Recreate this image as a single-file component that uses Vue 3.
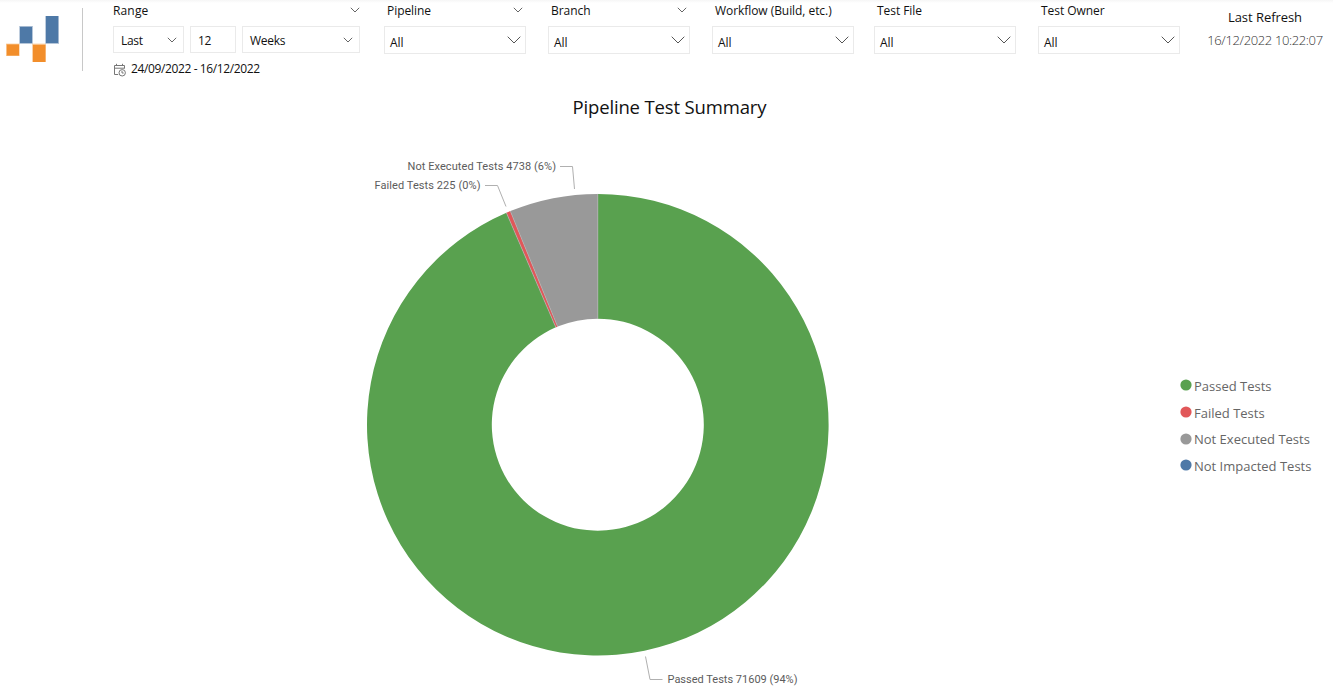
<script setup>
const slicers = [
  { title: 'Pipeline', toggle: true, cls: 'pipeline' },
  { title: 'Branch', toggle: true, cls: 'branch' },
  { title: 'Workflow (Build, etc.)', toggle: false, cls: 'workflow' },
  { title: 'Test File', toggle: false, cls: 'file' },
  { title: 'Test Owner', toggle: false, cls: 'owner' },
]

const cx = 597.8
const cy = 342.7
const outer = 230.8
const inner = 106

const data = [
  { name: 'Passed Tests', value: 71609, color: '#59a14f' },
  { name: 'Failed Tests', value: 225, color: '#e15759' },
  { name: 'Not Executed Tests', value: 4738, color: '#999999' },
  { name: 'Not Impacted Tests', value: 0, color: '#4e79a7' },
]
const total = data.reduce((sum, d) => sum + d.value, 0)

function point(radius, angle) {
  return `${(cx + radius * Math.sin(angle)).toFixed(2)} ${(cy - radius * Math.cos(angle)).toFixed(2)}`
}

let start = 0
const slices = data.filter((d) => d.value > 0).map((d) => {
  const end = start + (d.value / total) * Math.PI * 2
  const large = end - start > Math.PI ? 1 : 0
  const path = `M${point(outer, start)}A${outer} ${outer} 0 ${large} 1 ${point(outer, end)}L${point(inner, end)}A${inner} ${inner} 0 ${large} 0 ${point(inner, start)}Z`
  const edge = `M${point(outer, end)}L${point(inner, end)}`
  start = end
  return { ...d, path, edge }
})

const labels = [
  { text: 'Not Executed Tests 4738 (6%)', x: 407.5, y: 88, width: 148.5, line: '560,84.5 572.5,84.5 574.5,107' },
  { text: 'Failed Tests 225 (0%)', x: 374.5, y: 107, width: 106, line: '485,103.5 497.5,103.5 506,124.5' },
  { text: 'Passed Tests 71609 (94%)', x: 667.5, y: 601, width: 130, line: '645.5,574.5 650,597.5 662.5,597.5' },
]
</script>

<template>
  <div class="report">
    <header class="bar">
      <div class="brand">
        <svg class="logo" width="60" height="64" viewBox="0 0 60 64">
          <rect x="6" y="43.7" width="13.5" height="12.3" fill="#f9c086" />
          <rect x="7" y="44.5" width="12" height="11" fill="#f28e2b" />
          <rect x="19.3" y="26" width="13.5" height="17.8" fill="#a3b8d0" />
          <rect x="20" y="27" width="12" height="16" fill="#4e79a7" />
          <rect x="32.3" y="43.7" width="13.5" height="18.3" fill="#f9c086" />
          <rect x="33" y="45" width="12.4" height="17" fill="#f28e2b" />
          <rect x="45.3" y="16" width="13.7" height="27.8" fill="#a3b8d0" />
          <rect x="46" y="16" width="12" height="27" fill="#4e79a7" />
        </svg>
      </div>

      <section class="range">
        <div class="head">
          <span class="t-range">Range</span>
          <svg class="small-chev" width="10" height="6" viewBox="0 0 10 6"><path d="M.8 .8 5 5 9.2 .8" /></svg>
        </div>
        <div class="inputs">
          <div class="box last"><span>Last</span><svg width="10" height="6" viewBox="0 0 10 6"><path d="M.8 .8 5 5 9.2 .8" /></svg></div>
          <div class="box count"><span>12</span></div>
          <div class="box unit"><span>Weeks</span><svg width="10" height="6" viewBox="0 0 10 6"><path d="M.8 .8 5 5 9.2 .8" /></svg></div>
        </div>
        <div class="dates">
          <svg width="13" height="14" viewBox="0 0 13 14">
            <path d="M5.2 11.5H1.5V2.5H11.5V5.5M1.5 5.2H11.5M3.5 .8V2.5M9.5 .8V2.5" />
            <circle cx="9.2" cy="9.8" r="3.2" />
            <path d="M9 7.9V10H10.7" />
          </svg>
          <span>24/09/2022 - 16/12/2022</span>
        </div>
      </section>

      <section v-for="s in slicers" :key="s.title" class="slicer" :class="s.cls">
        <div class="head">
          <span>{{ s.title }}</span>
          <svg v-if="s.toggle" class="small-chev" width="10" height="6" viewBox="0 0 10 6"><path d="M.8 .8 5 5 9.2 .8" /></svg>
        </div>
        <div class="select">
          <span>All</span>
          <svg width="14" height="8" viewBox="0 0 14 8"><path d="M.7 .7 7 7 13.3 .7" /></svg>
        </div>
      </section>

      <section class="refresh">
        <div class="refresh-title">Last Refresh</div>
        <div class="refresh-time">16/12/2022 10:22:07</div>
      </section>
    </header>

    <main class="canvas">
      <svg class="chart" width="1180" height="617" viewBox="0 0 1180 617">
        <text class="title" x="572.5" y="32" textLength="194">Pipeline Test Summary</text>
        <path v-for="s in slices" :key="s.name" :d="s.path" :fill="s.color" />
        <path v-for="s in slices" :key="s.name + '-edge'" :d="s.edge" class="edge" />
        <g v-for="l in labels" :key="l.text">
          <polyline :points="l.line" class="leader" />
          <text class="label" :x="l.x" :y="l.y" :textLength="l.width">{{ l.text }}</text>
        </g>
      </svg>
      <ul class="legend">
        <li v-for="d in data" :key="d.name">
          <svg width="12" height="12" viewBox="0 0 12 12"><circle cx="6" cy="6" r="5.6" :fill="d.color" /></svg>
          <span>{{ d.name }}</span>
        </li>
      </ul>
    </main>
  </div>
</template>

<style>
body { margin: 0; background: #fff; }
</style>

<style scoped>
.report {
  width: 1333px;
  height: 699px;
  overflow: hidden;
  background: linear-gradient(#f6f6f6, #fff 3px);
  font-family: "Open Sans", "Noto Sans", sans-serif;
  font-size: 12px;
  color: #111;
}
.bar { display: flex; height: 82px; }
.brand {
  box-sizing: border-box;
  width: 83px;
  height: 63px;
  margin-top: 8px;
  border-right: 1px solid #c8c8c8;
}
.logo { display: block; margin-top: -8px; }
.bar path, .bar circle { fill: none; }
.head {
  display: flex;
  justify-content: space-between;
  align-items: center;
  height: 16px;
  margin-top: 3px;
  line-height: 16px;
  white-space: nowrap;
  letter-spacing: -0.06px;
}
.t-range { letter-spacing: 0.15px; }
.small-chev, .box svg { stroke: #666; stroke-width: 1; }
.small-chev { margin-top: -2px; }
.range { width: 247px; margin-left: 30px; }
.inputs { display: flex; margin-top: 7px; }
.box {
  box-sizing: border-box;
  display: flex;
  align-items: center;
  justify-content: space-between;
  height: 27px;
  border: 1px solid #eaeaea;
  padding: 2px 6px 0 7px;
  letter-spacing: -0.3px;
}
.box svg { margin-top: -2px; }
.last { width: 71px; }
.count { width: 46px; margin-left: 6px; }
.unit { width: 118px; margin-left: 6px; }
.dates {
  display: flex;
  align-items: center;
  height: 16px;
  margin-top: 7px;
  white-space: nowrap;
  letter-spacing: -0.38px;
}
.dates svg { stroke: #777; stroke-width: 1; margin: 3px 5px 0 0; }
.slicer { width: 142px; margin-left: 22px; }
.slicer.pipeline { margin-left: 24px; }
.slicer.file { margin-left: 20px; }
.slicer .head { padding: 0 3px; }
.select {
  box-sizing: border-box;
  display: flex;
  align-items: center;
  justify-content: space-between;
  height: 28px;
  margin-top: 7px;
  padding: 5px 4px 0 5px;
  border: 1px solid #eaeaea;
}
.select svg { stroke: #555; stroke-width: 1; margin-top: -5px; }
.refresh { width: 153px; text-align: center; white-space: nowrap; padding-left: 17px; box-sizing: border-box; }
.refresh-title { margin-top: 7px; line-height: 20px; font-size: 13px; letter-spacing: -0.05px; }
.refresh-time { line-height: 20px; margin-top: 3px; font-size: 13px; color: #333; font-weight: 300; letter-spacing: -0.36px; }
.canvas { display: flex; height: 617px; }
.title { font-size: 18.5px; fill: #111; }
.edge { fill: none; stroke: #b0b0b0; stroke-width: 0.7; }
.leader { fill: none; stroke: #b0b0b0; stroke-width: 1; }
.label { font-family: Roboto, "Open Sans", sans-serif; font-size: 11px; font-weight: 400; fill: #5c5c5c; }
.legend { list-style: none; margin: 290px 0 0; padding: 0; width: 153px; color: #666; font-size: 13px; }
.legend li { display: flex; align-items: center; height: 26.7px; white-space: nowrap; }
.legend svg { margin-right: 2px; }
.legend span { padding-top: 1px; }
</style>
